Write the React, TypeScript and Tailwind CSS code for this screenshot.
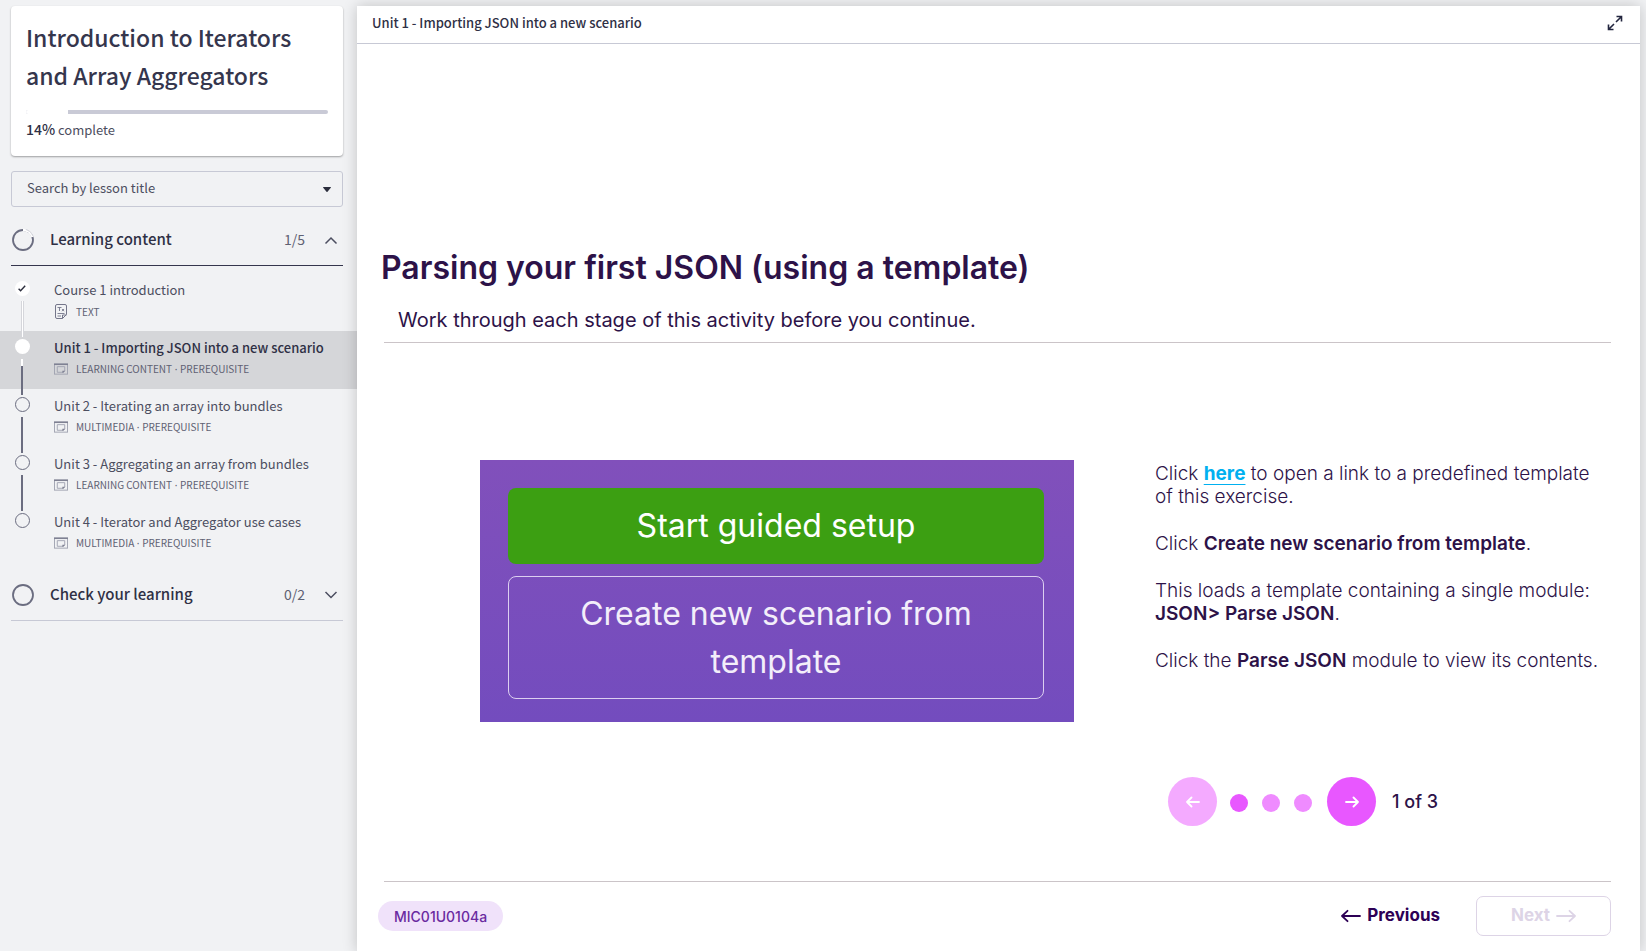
import { useState } from "react";

type Lesson = {
  title: string;
  kind: string[];
  icon: "text" | "media";
  status: "done" | "current" | "todo";
};

const lessons: Lesson[] = [
  { title: "Course 1 introduction", kind: ["TEXT"], icon: "text", status: "done" },
  { title: "Unit 1 - Importing JSON into a new scenario", kind: ["LEARNING CONTENT", "PREREQUISITE"], icon: "media", status: "current" },
  { title: "Unit 2 - Iterating an array into bundles", kind: ["MULTIMEDIA", "PREREQUISITE"], icon: "media", status: "todo" },
  { title: "Unit 3 - Aggregating an array from bundles", kind: ["LEARNING CONTENT", "PREREQUISITE"], icon: "media", status: "todo" },
  { title: "Unit 4 - Iterator and Aggregator use cases", kind: ["MULTIMEDIA", "PREREQUISITE"], icon: "media", status: "todo" },
];

function TextIcon() {
  return (
    <svg width="14" height="15" viewBox="0 0 14 15" fill="none" stroke="#74768a" aria-hidden="true">
      <path d="M8.500 14.500H3A1.500 1.500 0 0 1 1.500 13V2A1.500 1.500 0 0 1 3 .500H11A1.500 1.500 0 0 1 12.500 2V10.500L8.500 14.500V11H12.500" />
      <path d="M3.500 3.500H7.500M5.500 3.500V7M8 5L10 7.200M10 5L8 7.200" strokeWidth=".9" />
      <path d="M3.500 9.500H10.500M3.500 12H7" strokeWidth=".9" />
    </svg>
  );
}

function MediaIcon() {
  return (
    <svg width="15" height="12" viewBox="0 0 15 12" fill="none" stroke="#a0a2b0" aria-hidden="true">
      <rect x=".5" y=".5" width="14" height="11" />
      <path d="M0 1H15" stroke="#7f8193" strokeWidth="1.500" />
      <path d="M3.500 3.500H11.500V8L10 9.500H3.500Z" />
      <path d="M9 10V8H12L10 10Z" fill="#7f8193" stroke="none" />
    </svg>
  );
}

function LessonMarker({ status }: { status: Lesson["status"] }) {
  if (status === "todo") {
    return <span className="size-[15px] shrink-0 rounded-full border border-[#6b6d80]" />;
  }
  return (
    <span className="flex size-[15px] shrink-0 items-center justify-center rounded-full bg-white">
      {status === "done" && (
        <svg width="8" height="7" viewBox="0 0 8 7" fill="none" stroke="#2b2d3c" strokeWidth="1.400" aria-hidden="true">
          <path d="M.6 3.700L2.600 5.700L7.200 .8" />
        </svg>
      )}
    </span>
  );
}

function Connector({ status }: { status: Lesson["status"] }) {
  if (status === "done") {
    return <span className="h-9 w-[3px] shrink-0 border-x border-[#d5d6db] bg-white" />;
  }
  if (status === "current") {
    return (
      <span className="flex h-9 w-[2px] shrink-0 flex-col bg-[#6b6d80]">
        <span className="h-[7px] bg-white" />
      </span>
    );
  }
  return <span className="h-9 w-[2px] shrink-0 bg-[#6b6d80]" />;
}

function LessonRow({ lesson, last }: { lesson: Lesson; last: boolean }) {
  const current = lesson.status === "current";
  return (
    <li className={current ? "bg-[#d5d6d9]" : ""}>
      <a href="#lesson" aria-current={current ? "page" : undefined} className="flex h-[58px] gap-6 pl-[14px]">
        <span className="flex w-4 flex-col items-center gap-[5px] pt-2">
          <LessonMarker status={lesson.status} />
          {!last && <Connector status={lesson.status} />}
        </span>
        <span className="flex flex-col pt-[7px]">
          <span className={current ? "text-[13px] leading-5 font-medium text-[#2f3045]" : "text-[13px] leading-5 text-[#4c4e60]"}>
            {lesson.title}
          </span>
          <span className="flex h-[22px] items-center gap-2 text-[10px] text-[#5f6173]">
            <span className="flex w-[14px] justify-center">{lesson.icon === "text" ? <TextIcon /> : <MediaIcon />}</span>
            <span>
              {lesson.kind[0]}
              {lesson.kind[1] && <span className="font-['Noto_Sans',sans-serif]"> · </span>}
              {lesson.kind[1]}
            </span>
          </span>
        </span>
      </a>
    </li>
  );
}

function SectionHeader({ title, count, open, partial, onToggle }: { title: string; count: string; open: boolean; partial: boolean; onToggle: () => void }) {
  return (
    <button
      type="button"
      aria-expanded={open}
      onClick={onToggle}
      className={
        open
          ? "flex h-[52px] w-full items-center border-b border-[#35364d] text-left"
          : "flex h-[52px] w-full items-center border-b border-[#c7c9d5] text-left"
      }
    >
      <svg width="24" height="24" viewBox="0 0 24 24" fill="none" strokeWidth="1.800" aria-hidden="true">
        <circle cx="12" cy="12" r="10" stroke="#6b6d80" />
        {partial && <path d="M12 2A10 10 0 0 1 21.500 9" stroke="#fff" strokeWidth="2.400" />}
        {partial && <path d="M15 1.500A11 11 0 0 1 22 8" stroke="#cfd0d8" strokeWidth=".8" />}
      </svg>
      <span className="ml-[15px] flex-1 text-[15px] font-medium text-[#2f3045]">{title}</span>
      <span className="text-[14px] text-[#5f6173]">{count}</span>
      <svg className="mr-1 ml-[18px]" width="16" height="16" viewBox="0 0 16 16" fill="none" stroke="#4c4e60" strokeWidth="1.500" aria-hidden="true">
        <path d={open ? "M2.500 11.500L8 6L13.500 11.500" : "M2.500 5L8 10.500L13.500 5"} />
      </svg>
    </button>
  );
}

function Sidebar() {
  const [open, setOpen] = useState(true);
  const [checkOpen, setCheckOpen] = useState(false);
  return (
    <aside className="w-[357px] shrink-0 pt-[6px] font-['Noto_Sans_CJK_SC','Noto_Sans',sans-serif]">
      <div className="mr-[14px] ml-[11px]">
        <div className="rounded-[4px] bg-white px-[15px] pt-3 pb-4 shadow-[0_1px_2px_rgba(0,0,0,0.35)]">
          <h1 className="text-[23px] leading-[38px] font-medium text-[#35364d]">Introduction to Iterators and Array Aggregators</h1>
          <div role="progressbar" aria-label="Course progress" aria-valuenow={14} aria-valuemin={0} aria-valuemax={100} className="mt-4 h-1 overflow-hidden rounded-[2px] bg-[#c9cad6]">
            <div className="h-full w-[14%] bg-white" />
          </div>
          <p className="mt-[5px] text-[13px] leading-5 text-[#4c4e60]">
            <span className="text-[14px] font-medium text-[#2f3045]">14%</span> complete
          </p>
        </div>
        <div className="mt-[15px] flex h-9 items-center rounded-[3px] border border-[#c7c9d5] pr-[11px]">
          <select aria-label="Search by lesson title" defaultValue="" className="h-full min-w-0 flex-1 appearance-none bg-transparent pb-[2px] pl-[15px] text-[13px] text-[#4c4e60]">
            <option value="">Search by lesson title</option>
            {lessons.map((l) => (
              <option key={l.title}>{l.title}</option>
            ))}
          </select>
          <svg width="8" height="5" viewBox="0 0 8 5" fill="#2b2d3c" aria-hidden="true">
            <path d="M0 .5Q0 0 .5 0H7.500Q8 0 8 .5L4.500 4.700Q4 5.200 3.500 4.700Z" />
          </svg>
        </div>
        <div className="mt-[7px]">
          <SectionHeader title="Learning content" count="1/5" open={open} partial onToggle={() => setOpen(!open)} />
        </div>
      </div>
      {open && (
        <ul className="mt-[7px]">
          {lessons.map((l, i) => (
            <LessonRow key={l.title} lesson={l} last={i === lessons.length - 1} />
          ))}
        </ul>
      )}
      <div className="mt-[6px] mr-[14px] ml-[11px]">
        <SectionHeader title="Check your learning" count="0/2" open={checkOpen} partial={false} onToggle={() => setCheckOpen(!checkOpen)} />
      </div>
    </aside>
  );
}

function Arrow({ right }: { right?: boolean }) {
  return (
    <svg width="20" height="14" viewBox="0 0 20 14" fill="none" stroke="currentColor" strokeWidth="1.800" strokeLinecap="round" strokeLinejoin="round" aria-hidden="true">
      <path d={right ? "M1 7H19M13.500 1.800L19 7L13.500 12.200" : "M19 7H1M6.500 1.800L1 7L6.500 12.200"} />
    </svg>
  );
}

function SmallArrow({ right }: { right?: boolean }) {
  return (
    <svg width="14" height="12" viewBox="0 0 14 12" fill="none" stroke="#fff" strokeWidth="1.800" strokeLinecap="round" strokeLinejoin="round" aria-hidden="true">
      <path d={right ? "M1 6H13M8.500 1.500L13 6L8.500 10.500" : "M13 6H1M5.500 1.500L1 6L5.500 10.500"} />
    </svg>
  );
}

function SetupPanel() {
  return (
    <div className="flex h-[262px] w-[594px] shrink-0 flex-col gap-3 bg-linear-to-b from-[#8150bb] to-[#734cbe] pt-7 pr-[30px] pb-[23px] pl-7 text-[32px] leading-[48px] text-white">
      <button type="button" className="h-[76px] rounded-[8px] bg-[#3c9f12]">Start guided setup</button>
      <button type="button" className="flex-1 rounded-[8px] border border-[#dccff0] px-16 text-[#f3eefa]">
        Create new scenario from template
      </button>
    </div>
  );
}

function Instructions() {
  return (
    <div className="flex flex-col gap-6 text-[19px] leading-[23px] font-light text-[#2d1248]">
      <p>
        Click <a href="#template" className="font-bold text-[#00b0f0] underline decoration-1 underline-offset-4">here</a> to open a link to a predefined template of this exercise.
      </p>
      <p>
        Click <b className="font-semibold">Create new scenario from template</b>.
      </p>
      <p>
        This loads a template containing a single module: <b className="font-semibold">JSON&gt; Parse JSON</b>.
      </p>
      <p>
        Click the <b className="font-semibold">Parse JSON</b> module to view its contents.
      </p>
    </div>
  );
}

function StepPager() {
  return (
    <div className="mt-[105px] ml-[13px] flex items-center text-[#2d1248]">
      <button type="button" aria-label="Previous step" className="flex size-[49px] items-center justify-center rounded-full bg-[#f4aaff]">
        <SmallArrow />
      </button>
      <div className="mx-[13px] flex gap-[14px] pt-[3px]">
        <span className="size-[18px] rounded-full bg-[#e857ff]" />
        <span className="size-[18px] rounded-full bg-[#ef8bff]" />
        <span className="size-[18px] rounded-full bg-[#ef8bff]" />
      </div>
      <button type="button" aria-label="Next step" className="ml-[2px] flex size-[49px] items-center justify-center rounded-full bg-[#e857ff]">
        <SmallArrow right />
      </button>
      <span className="ml-4 text-[18px] font-medium">1 of 3</span>
    </div>
  );
}

export default function App() {
  return (
    <div className="flex min-h-screen bg-[#f1f2f4]">
      <Sidebar />
      <main className="mt-[6px] mr-[6px] flex min-w-0 flex-1 flex-col bg-white font-[Inter,sans-serif] shadow-[0_0_14px_rgba(0,0,0,0.2)]">
        <header className="flex h-[38px] items-center justify-between border-b border-[#c7c9d5] pr-[17px] pb-1 pl-[15px]">
          <h2 className="font-['Noto_Sans_CJK_SC','Noto_Sans',sans-serif] text-[13px] leading-5 font-medium text-[#2f3045]">
            Unit 1 - Importing JSON into a new scenario
          </h2>
          <button type="button" aria-label="Full screen">
            <svg width="16" height="16" viewBox="0 0 16 16" fill="none" stroke="#23263f" strokeWidth="1.600" aria-hidden="true">
              <path d="M9.500 1.500H14.500V6.500M14.500 1.500L9 7M6.500 14.500H1.500V9.500M1.500 14.500L7 9" />
            </svg>
          </button>
        </header>
        <article className="flex flex-1 flex-col pt-[200px] pr-[29px] pl-[24px] text-[#2d1248]">
          <h3 className="text-[32px] leading-[48px] font-semibold">Parsing your first JSON (using a template)</h3>
          <p className="mt-[14px] ml-[17px] text-[20px] leading-7">Work through each stage of this activity before you continue.</p>
          <hr className="mt-[8px] ml-[3px] border-[#cbc4c8]" />
          <div className="mt-[117px] flex gap-[81px] pl-[99px]">
            <SetupPanel />
            <div className="mt-[2px] flex-1">
              <Instructions />
              <StepPager />
            </div>
          </div>
          <hr className="mt-[55px] ml-[3px] border-[#cbc4c8]" />
          <footer className="flex items-center pt-[14px] pb-4">
            <span className="-ml-[3px] flex h-[30px] items-center rounded-full bg-[#f0e2fa] px-4 text-[14px] font-medium text-[#6a2aa0]">MIC01U0104a</span>
            <button type="button" className="ml-auto flex items-center gap-[6px] text-[17px] font-bold text-[#2d0055]">
              <Arrow />
              Previous
            </button>
            <button type="button" disabled className="ml-9 flex h-10 w-[135px] items-center justify-center gap-[6px] rounded-[7px] border border-[#ddd4e6] text-[17px] font-bold text-[#ddd4e6]">
              Next
              <Arrow right />
            </button>
          </footer>
        </article>
      </main>
    </div>
  );
}
